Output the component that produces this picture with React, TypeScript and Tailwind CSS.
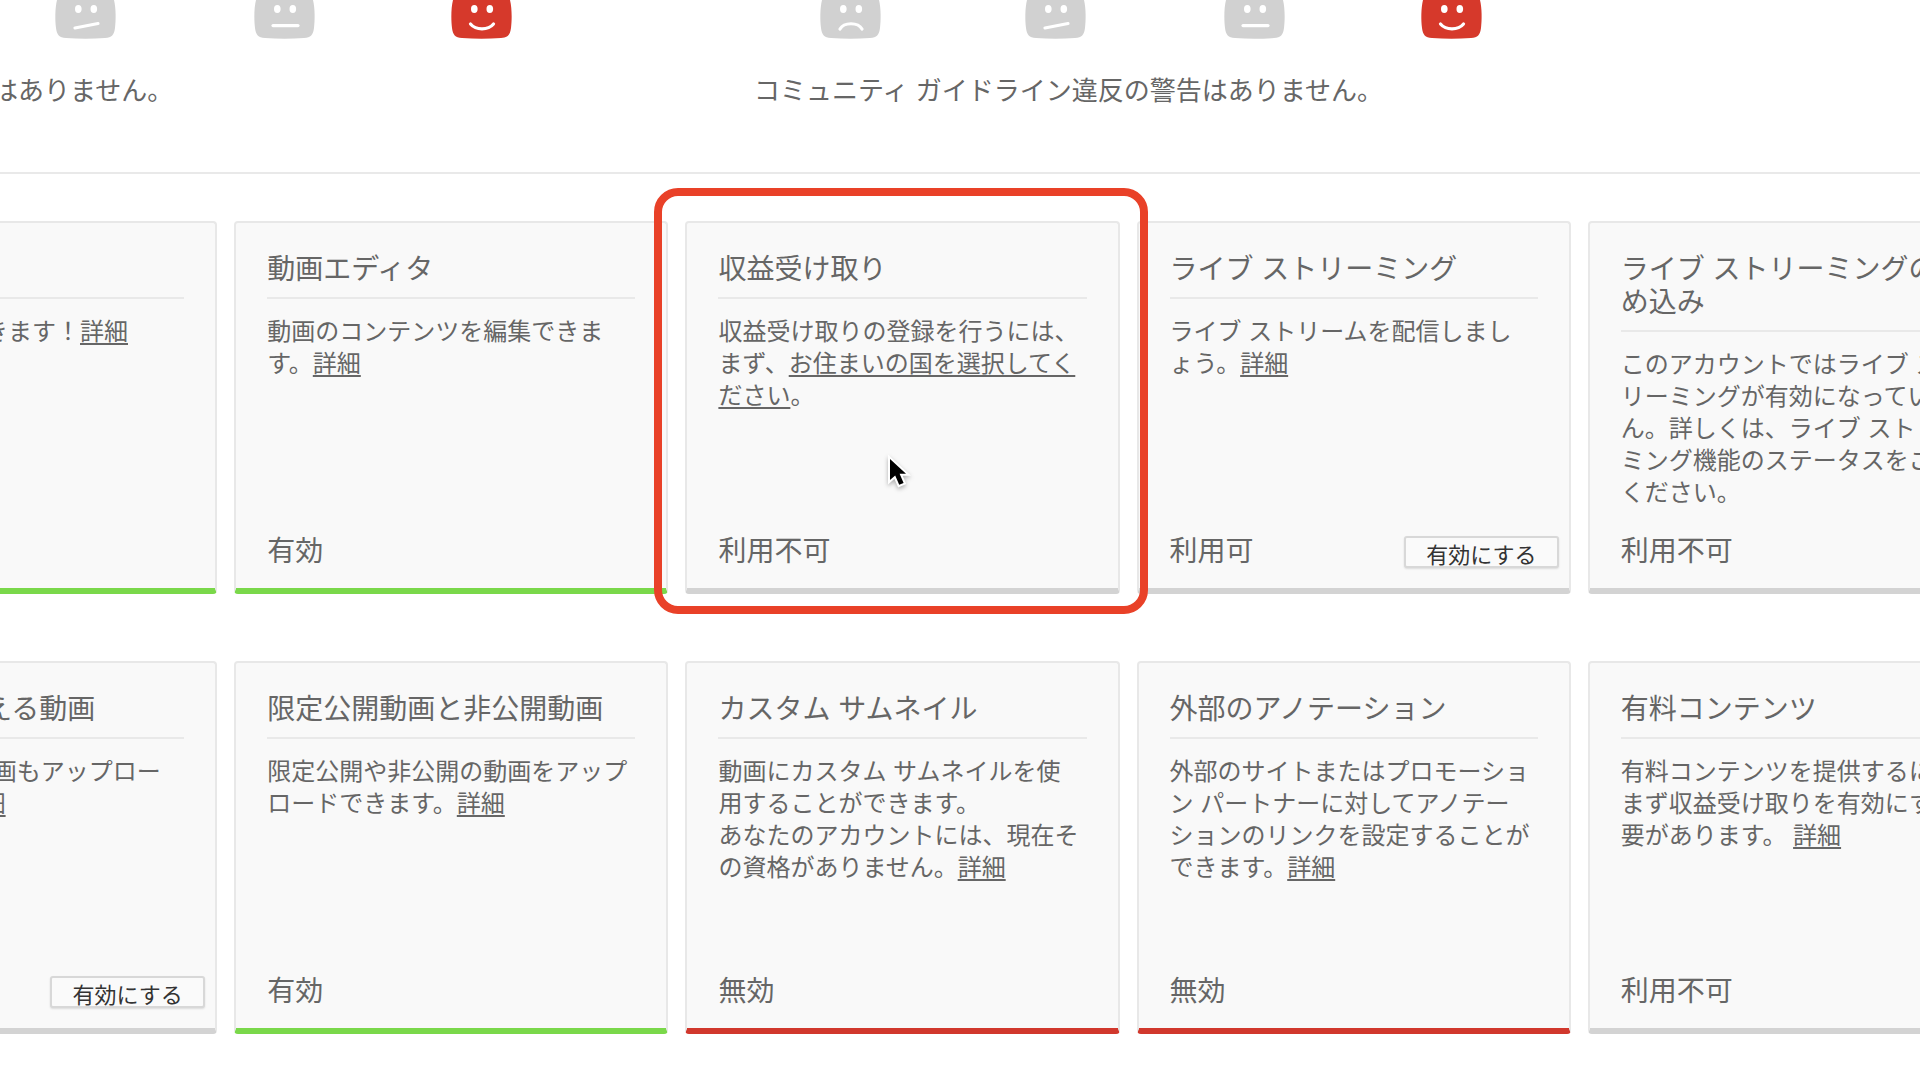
/** @file Channel status page: account standing on top, feature cards below. */

import type { ReactNode } from "react";

type Mood = "sad" | "uneasy" | "neutral" | "happy";
type Tone = "enabled" | "disabled" | "idle";

interface Feature {
  title: string;
  body: ReactNode;
  status: string;
  tone: Tone;
  canEnable?: boolean;
  highlighted?: boolean;
}

const MOUTHS: Record<Mood, string> = {
  sad: "M20 29C24 22 38 22 42 29",
  uneasy: "M20 28L43 23.5",
  neutral: "M19 25.6H44",
  happy: "M19.5 24C25 30.5 37 30.5 42.5 24",
};

const MOODS: Mood[] = ["sad", "uneasy", "neutral", "happy"];

const TONES: Record<Tone, string> = {
  enabled: "border-b-[#7ad84a]",
  disabled: "border-b-[#d1382d]",
  idle: "border-b-[#d3d3d3]",
};

function Face({ mood }: { mood: Mood }) {
  return (
    <svg viewBox="0 0 61 39" className="h-[39px] w-[61px]" aria-hidden="true">
      <path
        d="M2 0C0 8 0 20 1 28C2 35 4 37.5 11 38C24 39 37 39 50 38C57 37.5 59 35 60 28C61 20 61 8 59 0Z"
        fill={mood === "happy" ? "#d6392b" : "#d1d1d1"}
      />
      <ellipse cx="23.3" cy="9" rx="3.3" ry="4" fill="#fff" />
      <ellipse cx="38.8" cy="9" rx="3.3" ry="4" fill="#fff" />
      <path d={MOUTHS[mood]} fill="none" stroke="#fff" strokeWidth="3.2" strokeLinecap="round" />
    </svg>
  );
}

function Standing({ message }: { message: string }) {
  return (
    <section className="w-[970px] shrink-0">
      <div className="grid grid-cols-[205px_199px_197px_61px] pl-[66px]">
        {MOODS.map((mood) => (
          <Face key={mood} mood={mood} />
        ))}
      </div>
      <p className="mt-[34px] text-[26px] leading-9 whitespace-nowrap">{message}</p>
    </section>
  );
}

function TextLink({ children }: { children: ReactNode }) {
  return (
    <a href="#" className="underline decoration-2 underline-offset-[3px]">
      {children}
    </a>
  );
}

function Pointer() {
  return (
    <svg
      viewBox="0 0 26 40"
      className="absolute top-[230px] left-[200px] h-10 w-[26px] drop-shadow-[0_2px_2px_rgba(0,0,0,0.3)]"
      aria-hidden="true"
    >
      <path
        d="M3 6V27L8.2 22.4L12.2 31.8L16.6 30L12.6 20.8H19Z"
        fill="#000"
        stroke="#fff"
        strokeWidth="4"
        paintOrder="stroke"
      />
    </svg>
  );
}

function FeatureCard({ title, body, status, tone, canEnable, highlighted }: Feature) {
  return (
    <article
      className={`relative flex min-h-[373px] flex-col rounded-[4px] border-2 border-b-[6px] border-[#e8e8e8] bg-[#f9f9f9] pt-[30px] pb-5 pl-[31px] ${TONES[tone]}`}
    >
      <h2 className="mr-[31px] border-b-2 border-[#e9e9e9] pb-[11px] text-[28px] leading-[33px] whitespace-pre">
        {title}
      </h2>
      <p className="mt-[17px] text-2xl leading-8 whitespace-pre">{body}</p>
      <div className="mt-auto mr-[10px] flex items-center justify-between">
        <span className="text-[28px] leading-[33px]">{status}</span>
        {canEnable ? (
          <button
            type="button"
            className="h-8 w-[155px] rounded-[3px] border-2 border-[#d8d8d8] bg-[#fafafa] pt-1.5 text-[22px] leading-6 text-[#333] shadow-[0_1px_2px_rgba(0,0,0,0.12)]"
          >
            有効にする
          </button>
        ) : null}
      </div>
      {highlighted ? (
        <>
          <div className="pointer-events-none absolute -top-[35px] -right-[30px] -bottom-[26px] -left-[33px] z-10 rounded-3xl border-8 border-[#e94128]" />
          <Pointer />
        </>
      ) : null}
    </article>
  );
}

const FEATURES: Feature[] = [
  {
    title: "アップロード",
    body: <>動画をアップできます！<TextLink>詳細</TextLink></>,
    status: "有効",
    tone: "enabled",
  },
  {
    title: "動画エディタ",
    body: <>{"動画のコンテンツを編集できま\nす。"}<TextLink>詳細</TextLink></>,
    status: "有効",
    tone: "enabled",
  },
  {
    title: "収益受け取り",
    body: (
      <>
        {"収益受け取りの登録を行うには、\nまず、"}
        <TextLink>{"お住まいの国を選択してく\nださい"}</TextLink>。
      </>
    ),
    status: "利用不可",
    tone: "idle",
    highlighted: true,
  },
  {
    title: "ライブ ストリーミング",
    body: <>{"ライブ ストリームを配信しまし\nょう。"}<TextLink>詳細</TextLink></>,
    status: "利用可",
    tone: "idle",
    canEnable: true,
  },
  {
    title: "ライブ ストリーミングの埋\nめ込み",
    body: "このアカウントではライブ スト\nリーミングが有効になっていませ\nん。詳しくは、ライブ ストリー\nミング機能のステータスをご確認\nください。",
    status: "利用不可",
    tone: "idle",
  },
  {
    title: "制限時間を超える動画",
    body: <>{"15 分を超える動画もアップロー\nドできます。"}<TextLink>詳細</TextLink></>,
    status: "利用可",
    tone: "idle",
    canEnable: true,
  },
  {
    title: "限定公開動画と非公開動画",
    body: <>{"限定公開や非公開の動画をアップ\nロードできます。"}<TextLink>詳細</TextLink></>,
    status: "有効",
    tone: "enabled",
  },
  {
    title: "カスタム サムネイル",
    body: (
      <>
        {"動画にカスタム サムネイルを使\n用することができます。\nあなたのアカウントには、現在そ\nの資格がありません。"}
        <TextLink>詳細</TextLink>
      </>
    ),
    status: "無効",
    tone: "disabled",
  },
  {
    title: "外部のアノテーション",
    body: (
      <>
        {"外部のサイトまたはプロモーショ\nン パートナーに対してアノテー\nションのリンクを設定することが\nできます。"}
        <TextLink>詳細</TextLink>
      </>
    ),
    status: "無効",
    tone: "disabled",
  },
  {
    title: "有料コンテンツ",
    body: (
      <>
        {"有料コンテンツを提供するには、\nまず収益受け取りを有効にする必\n要があります。 "}
        <TextLink>詳細</TextLink>
      </>
    ),
    status: "利用不可",
    tone: "idle",
  },
];

export default function App() {
  return (
    <div
      lang="ja"
      className="min-h-screen overflow-hidden bg-white font-['Liberation_Sans','Noto_Sans_CJK_JP',sans-serif] text-[#666]"
    >
      <header className="border-b-2 border-[#e9e9e9] pb-[63px]">
        <div className="-ml-[216px] flex">
          <Standing message="著作権侵害の警告はありません。" />
          <Standing message="コミュニティ ガイドライン違反の警告はありません。" />
        </div>
      </header>
      <main className="mt-[47px] -ml-[217px] grid w-[calc(100%+319px)] grid-cols-5 gap-x-[17px] gap-y-[67px]">
        {FEATURES.map((feature) => (
          <FeatureCard key={feature.title} {...feature} />
        ))}
      </main>
    </div>
  );
}
